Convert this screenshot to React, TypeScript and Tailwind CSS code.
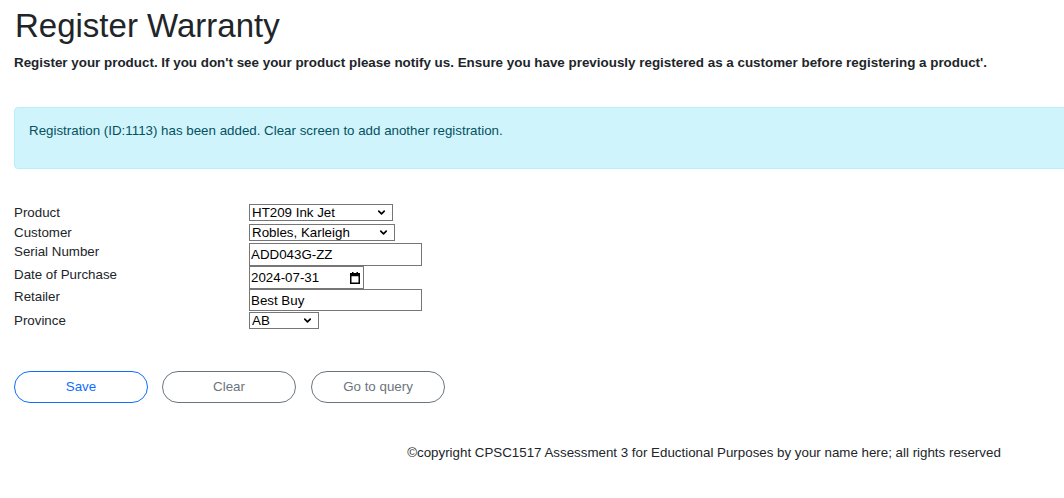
import { useState } from "react";
import { ChevronDown } from "lucide-react";

const products = ["HT209 Ink Jet", "LX100 Laser", "PX550 Photo"];
const customers = ["Robles, Karleigh", "Nguyen, Tam", "Smith, Jordan"];
const provinces = ["AB", "BC", "MB", "NB", "NL", "NS", "ON", "PE", "QC", "SK"];

const control = "border border-[#767676] bg-white text-black text-[13.33px]";

function CalendarIcon() {
  return (
    <svg width="10" height="12" viewBox="0 0 10 12" className="shrink-0">
      <rect x="2" y="0" width="1.5" height="2" fill="#000" />
      <rect x="6.5" y="0" width="1.5" height="2" fill="#000" />
      <rect x="0.75" y="1.75" width="8.5" height="9.5" fill="none" stroke="#000" strokeWidth="1.5" />
      <rect x="0.75" y="1.75" width="8.5" height="2.5" fill="#000" />
    </svg>
  );
}

function Dropdown({ value, options, onChange, width }: { value: string; options: string[]; onChange: (v: string) => void; width: string }) {
  return (
    <div className={`relative ${width} h-[17px]`}>
      <select
        value={value}
        onChange={(e) => onChange(e.target.value)}
        className={`${control} appearance-none w-full h-full leading-[15px] pl-[2px] pr-[16px]`}
      >
        {options.map((o) => <option key={o}>{o}</option>)}
      </select>
      <ChevronDown size={11} strokeWidth={3.5} className="pointer-events-none absolute right-[6px] top-[3px] text-black" />
    </div>
  );
}

export default function App() {
  const [product, setProduct] = useState(products[0]);
  const [customer, setCustomer] = useState(customers[0]);
  const [serial, setSerial] = useState("ADD043G-ZZ");
  const [purchaseDate, setPurchaseDate] = useState("2024-07-31");
  const [retailer, setRetailer] = useState("Best Buy");
  const [province, setProvince] = useState("AB");

  return (
    <div className="w-full overflow-hidden bg-white">
      <div className="w-[1408px] px-[14px] pt-[6px] text-[#212529] font-['Liberation_Sans',Arial,sans-serif]">
        <h1 className="text-[33px] leading-[40px] pl-px">Register Warranty</h1>
        <p className="mt-[7px] text-[13.4px] leading-[20px] font-bold">
          Register your product. If you don't see your product please notify us. Ensure you have previously registered as a customer before registering a product'.
        </p>

        <div className="mt-[34px] h-[62px] rounded-[4px] border border-[#b6effb] bg-[#cff4fc] pl-[14px] pt-[14px] text-[13.33px] leading-[18px] text-[#055160]">
          Registration (ID:1113) has been added. Clear screen to add another registration.
        </div>

        {/* form rows: label column then control */}
        <div className="mt-[35px] flex flex-col text-[13.33px] leading-[16px]">
          <div className="flex items-center">
            <label className="w-[235px]">Product</label>
            <Dropdown value={product} options={products} onChange={setProduct} width="w-[144px]" />
          </div>
          <div className="mt-[3px] flex items-center">
            <label className="w-[235px]">Customer</label>
            <Dropdown value={customer} options={customers} onChange={setCustomer} width="w-[146px]" />
          </div>
          <div className="mt-[2px] flex items-center">
            <label className="w-[235px] -mt-[5px]">Serial Number</label>
            <input value={serial} onChange={(e) => setSerial(e.target.value)} className={`${control} w-[173px] h-[23px] px-[1px]`} />
          </div>
          <div className="flex items-center">
            <label className="w-[235px] -mt-[5px]">Date of Purchase</label>
            <div className={`${control} w-[115px] h-[23px] flex items-center pr-[3px]`}>
              <input value={purchaseDate} onChange={(e) => setPurchaseDate(e.target.value)} className="min-w-0 flex-1 px-[1px] outline-none" />
              <CalendarIcon />
            </div>
          </div>
          <div className="flex items-center">
            <label className="w-[235px] -mt-[6px]">Retailer</label>
            <input value={retailer} onChange={(e) => setRetailer(e.target.value)} className={`${control} w-[173px] h-[22px] px-[1px]`} />
          </div>
          <div className="mt-[1px] flex items-center">
            <label className="w-[235px]">Province</label>
            <Dropdown value={province} options={provinces} onChange={setProvince} width="w-[70px]" />
          </div>
        </div>

        <div className="mt-[42px] flex gap-[14px] text-[13.33px]">
          <button className="w-[134px] h-[32px] rounded-full border border-[#0d6efd] text-[#0d6efd]">Save</button>
          <button className="w-[134px] h-[32px] rounded-full border border-[#6c757d] text-[#6c757d]">Clear</button>
          <button className="ml-px w-[134px] h-[32px] rounded-full border border-[#6c757d] text-[#6c757d]">Go to query</button>
        </div>

        <footer className="mt-[41px] text-center text-[13.33px] leading-[18px]">
          ©copyright CPSC1517 Assessment 3 for Eductional Purposes by your name here; all rights reserved
        </footer>
      </div>
    </div>
  );
}
